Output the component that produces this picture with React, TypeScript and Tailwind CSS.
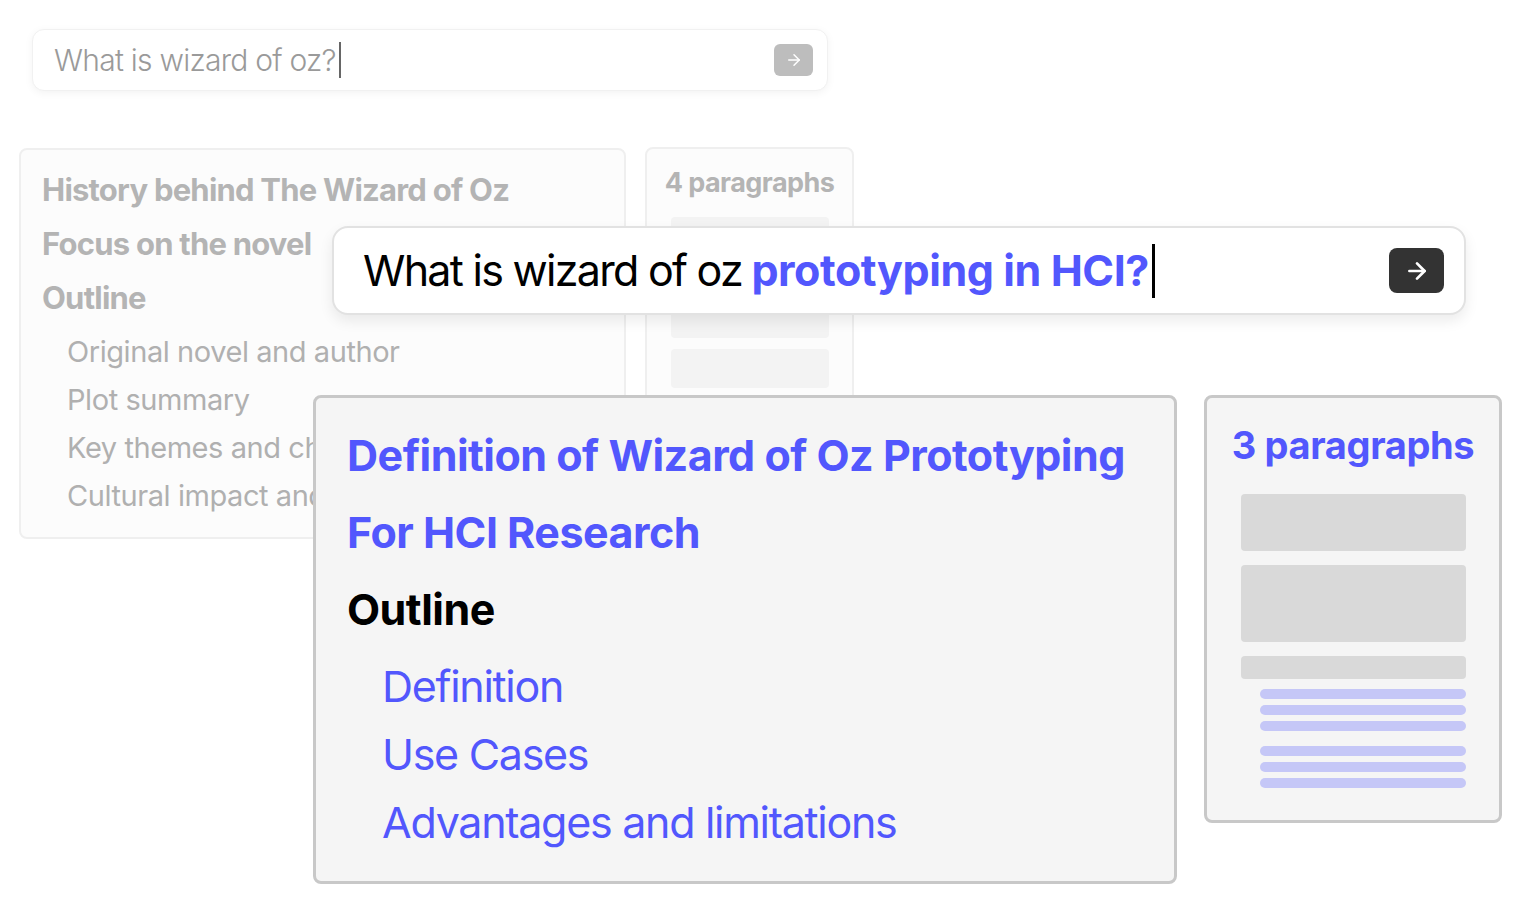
import { ArrowRight } from 'lucide-react';

const font = { fontFamily: 'Inter, "Noto Sans", sans-serif' };

function FadedOutline() {
  return (
    <div className="absolute left-[19px] top-[148px] flex h-[391px] w-[607px] flex-col overflow-hidden rounded-lg border-2 border-[#efefef] bg-[#fcfcfc] pl-[21px] pt-[13px]">
      <div className="text-[31px] font-bold leading-[54px] tracking-[-0.025em] text-[#b4b4b4]">
        History behind The Wizard of Oz
      </div>
      <div className="text-[31px] font-bold leading-[54px] tracking-[-0.025em] text-[#b4b4b4]">
        Focus on the novel
      </div>
      <div className="text-[31px] font-bold leading-[54px] tracking-[-0.025em] text-[#b4b4b4]">
        Outline
      </div>
      <ul className="mt-[3px] flex flex-col pl-[25px]">
        {['Original novel and author', 'Plot summary', 'Key themes and characters', 'Cultural impact and legacy'].map((item) => (
          <li key={item} className="whitespace-nowrap text-[29px] leading-[48px] tracking-[-0.015em] text-[#b0b0b0]">
            {item}
          </li>
        ))}
      </ul>
    </div>
  );
}

function FadedParagraphs() {
  return (
    <div className="absolute left-[645px] top-[147px] flex h-[260px] w-[209px] flex-col items-center rounded-lg border-2 border-[#efefef] bg-[#fcfcfc] pt-[16px]">
      <div className="text-[27px] font-bold leading-[36px] tracking-[-0.02em] text-[#b4b4b4]">4 paragraphs</div>
      <div className="mt-[16px] flex w-[158px] flex-col gap-[11px]">
        <div className="h-[48px] rounded bg-[#f3f3f3]" />
        <div className="h-[62px] rounded bg-[#f3f3f3]" />
        <div className="h-[39px] rounded bg-[#f3f3f3]" />
      </div>
    </div>
  );
}

function TopSearch() {
  return (
    <div className="absolute left-[32px] top-[29px] flex h-[62px] w-[796px] items-center justify-between rounded-[12px] border border-[#f1f1f1] bg-white pl-[21px] pr-[14px] shadow-[0_2px_8px_rgba(0,0,0,0.05)]">
      <div className="flex items-center text-[30px] font-light tracking-[-0.025em] text-[#9a9a9a]">
        What is wizard of oz?
        <span className="ml-[3px] inline-block h-[36px] w-[2px] bg-[#666]" />
      </div>
      <div className="flex h-[32px] w-[39px] items-center justify-center rounded-[6px] bg-[#bdbdbd]">
        <ArrowRight className="h-[18px] w-[18px] text-white" strokeWidth={2} />
      </div>
    </div>
  );
}

function MainSearch() {
  return (
    <div className="absolute left-[332px] top-[226px] z-10 flex h-[89px] w-[1134px] items-center justify-between rounded-[16px] border-2 border-[#e2e2e2] bg-white pl-[29px] pr-[20px] shadow-[0_6px_14px_rgba(0,0,0,0.08)]">
      <div className="flex items-center whitespace-nowrap text-[43px] text-black">
        <span className="tracking-[-0.04em]">What is wizard of oz&nbsp;</span>
        <span className="-ml-[1px] font-bold tracking-[-0.01em] text-[#5257fd]">prototyping in HCI?</span>
        <span className="ml-[3px] inline-block h-[54px] w-[3px] bg-black" />
      </div>
      <div className="flex h-[45px] w-[55px] items-center justify-center rounded-[8px] bg-[#333333]">
        <ArrowRight className="h-[26px] w-[26px] text-white" strokeWidth={2.5} />
      </div>
    </div>
  );
}

function MainOutline() {
  return (
    <div className="absolute left-[313px] top-[395px] z-20 flex h-[489px] w-[864px] flex-col rounded-lg border-[3px] border-[#c8c8c8] bg-[#f5f5f5] pl-[31px] pt-[19px]">
      <div className="whitespace-nowrap text-[43px] font-bold leading-[77px] tracking-[-0.012em] text-[#5257fd]">
        Definition of Wizard of Oz Prototyping
      </div>
      <div className="text-[43px] font-bold leading-[77px] tracking-[-0.012em] text-[#5257fd]">
        For HCI Research
      </div>
      <div className="text-[43px] font-bold leading-[77px] tracking-[-0.012em] text-black">Outline</div>
      <ul className="mt-[4px] flex flex-col pl-[35px]">
        {['Definition', 'Use Cases', 'Advantages and limitations'].map((item) => (
          <li key={item} className="text-[43px] leading-[68px] tracking-[-0.03em] text-[#5257fd]">
            {item}
          </li>
        ))}
      </ul>
    </div>
  );
}

function MainParagraphs() {
  return (
    <div className="absolute left-[1204px] top-[395px] z-20 flex h-[428px] w-[298px] flex-col items-center rounded-lg border-[3px] border-[#c8c8c8] bg-[#f5f5f5] pt-[24px]">
      <div className="whitespace-nowrap text-[38px] font-bold leading-[46px] tracking-[-0.01em] text-[#5257fd]">3 paragraphs</div>
      <div className="mt-[26px] flex w-[225px] flex-col">
        <div className="h-[57px] rounded bg-[#d9d9d9]" />
        <div className="mt-[14px] h-[77px] rounded bg-[#d9d9d9]" />
        <div className="mt-[14px] h-[23px] rounded bg-[#d9d9d9]" />
        <div className="mt-[10px] flex flex-col gap-[6px] pl-[19px]">
          <div className="h-[10px] rounded-full bg-[#c5c7f7]" />
          <div className="h-[10px] rounded-full bg-[#c5c7f7]" />
          <div className="h-[10px] rounded-full bg-[#c5c7f7]" />
          <div className="mt-[9px] h-[10px] rounded-full bg-[#c5c7f7]" />
          <div className="h-[10px] rounded-full bg-[#c5c7f7]" />
          <div className="h-[10px] rounded-full bg-[#c5c7f7]" />
        </div>
      </div>
    </div>
  );
}

export default function App() {
  return (
    <div className="relative h-[912px] w-[1520px] overflow-hidden bg-white" style={font}>
      <TopSearch />
      <FadedOutline />
      <FadedParagraphs />
      <MainSearch />
      <MainOutline />
      <MainParagraphs />
    </div>
  );
}
